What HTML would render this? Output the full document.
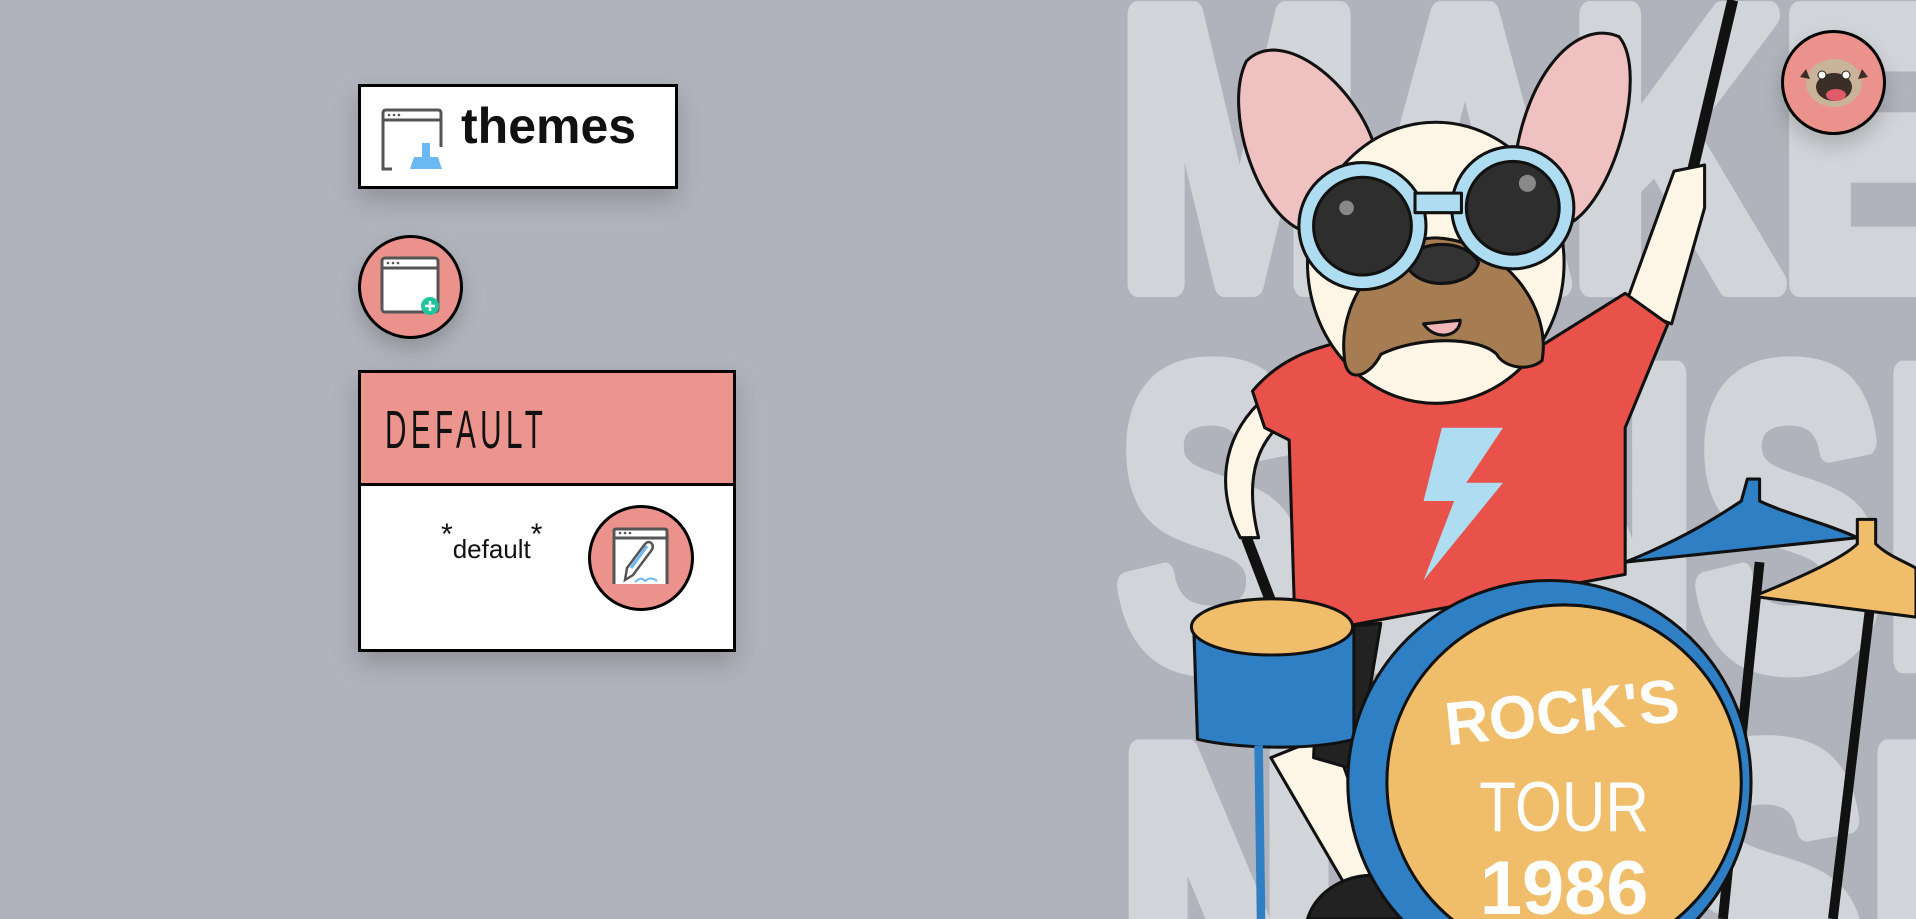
<!DOCTYPE html>
<html><head><meta charset="utf-8"><style>
html,body{margin:0;padding:0}
body{width:1916px;height:919px;overflow:hidden;background:#b0b3bb;position:relative;font-family:"Liberation Sans",sans-serif}
.abs{position:absolute}
svg{overflow:hidden}
.box{position:absolute;background:#fff;border:3px solid #000;box-sizing:border-box;box-shadow:0 12px 24px rgba(0,0,0,.18)}
.circ{position:absolute;border-radius:50%;background:#ec928c;border:3px solid #000;box-sizing:border-box;box-shadow:0 10px 20px rgba(0,0,0,.18)}
</style></head><body>
<svg class="abs" style="left:0;top:0" width="1916" height="919" viewBox="0 0 1568 752">
 <g fill="#d1d4d8" stroke="#d1d4d8" stroke-width="22" stroke-linejoin="round" font-family="Liberation Sans" font-weight="bold">
  <text x="915" y="232" font-size="320" textLength="700" lengthAdjust="spacingAndGlyphs">MAKE</text>
  <text x="915" y="540" font-size="340" textLength="780" lengthAdjust="spacingAndGlyphs">SENSE</text>
  <text x="915" y="850" font-size="340" textLength="780" lengthAdjust="spacingAndGlyphs">NOISE</text>
 </g>
 <g stroke="#111" stroke-width="2.5" stroke-linejoin="round">
  <line x1="1385" y1="140" x2="1418" y2="0" stroke-width="9"/>
  <path d="M1070 190 C1030 180 1000 90 1020 50 C1050 20 1110 70 1125 120 Z" fill="#f0c1c1"/>
  <path d="M1240 130 C1250 60 1290 15 1325 30 C1350 60 1320 170 1280 185 Z" fill="#f0c1c1"/>
  <path d="M1330 250 L1370 140 L1395 135 L1395 170 L1368 265 Z" fill="#fdf5e6"/>
  <path d="M1030 330 C1000 360 995 400 1015 440 L1030 440 C1020 400 1025 370 1045 350 Z" fill="#fdf5e6"/>
  <path d="M1040 620 L1110 740 L1140 740 L1090 600 Z" fill="#fdf5e6"/>
  <path d="M1070 752 C1080 720 1120 710 1140 720 L1150 752 Z" fill="#222"/>
  <path d="M1025 320 C1050 290 1080 285 1095 280 L1250 290 L1330 240 L1365 265 L1330 350 L1330 470 L1060 520 L1055 360 L1035 350 Z" fill="#e8524a"/>
  <path d="M1080 515 L1130 510 L1110 630 L1075 620 Z" fill="#222"/>
  <ellipse cx="1175" cy="215" rx="105" ry="115" fill="#fdf5e6"/>
  <path d="M1100 290 C1095 240 1140 190 1180 195 C1230 200 1270 250 1262 295 C1250 305 1230 300 1225 290 C1210 275 1160 275 1130 290 C1120 310 1100 315 1100 290 Z" fill="#a67c52"/>
  <path d="M1165 265 C1175 280 1195 275 1195 262 Z" fill="#f0b6b8"/>
  <path d="M1150 215 C1160 195 1200 195 1210 215 C1205 235 1160 240 1150 215 Z" fill="#333"/>
  <circle cx="1115" cy="185" r="52" fill="#aedcf0"/>
  <circle cx="1238" cy="170" r="50" fill="#aedcf0"/>
  <rect x="1158" y="158" width="38" height="16" fill="#aedcf0"/>
  <circle cx="1115" cy="185" r="40" fill="#2e2e2e"/>
  <circle cx="1238" cy="170" r="38" fill="#2e2e2e"/>
  <line x1="1020" y1="440" x2="1066" y2="560" stroke-width="9"/>
  <path d="M977 515 L1108 515 L1108 605 C1070 615 1010 612 980 605 Z" fill="#2e7fc4"/>
  <ellipse cx="1041" cy="513" rx="66" ry="23" fill="#f0be6a"/>
  <line x1="1030" y1="610" x2="1032" y2="752" stroke-width="7" stroke="#2e7fc4"/>
  <line x1="1440" y1="460" x2="1410" y2="752" stroke-width="8"/>
  <line x1="1530" y1="500" x2="1500" y2="752" stroke-width="8"/>
  <circle cx="1268" cy="640" r="165" fill="#2e7fc4"/>
  <circle cx="1280" cy="640" r="145" fill="#f0be6a"/>
  <path d="M1330 460 C1380 440 1410 420 1425 410 L1430 392 L1440 392 L1440 410 C1460 420 1500 430 1520 440 Z" fill="#2e7fc4"/>
  <path d="M1435 488 C1480 470 1510 455 1520 445 L1520 425 L1535 425 L1535 445 C1545 455 1560 460 1568 465 L1568 505 Z" fill="#f0be6a"/>
 </g>
 <path d="M1180 350 L1230 350 L1200 395 L1230 395 L1165 475 L1190 410 L1165 410 Z" fill="#aedcf0"/>
 <circle cx="1102" cy="170" r="6" fill="#888"/><circle cx="1250" cy="150" r="7" fill="#888"/>
 <g fill="#fff" text-anchor="middle" font-family="Liberation Sans">
  <text x="1278" y="600" font-size="50" font-weight="bold" transform="rotate(-6 1278 580)">ROCK'S</text>
  <text x="1280" y="680" font-size="58" transform="scale(0.85 1)" style="transform-origin:1280px 680px">TOUR</text>
  <text x="1280" y="748" font-size="62" font-weight="bold">1986</text>
 </g>
</svg>

<div class="box" style="left:358px;top:84px;width:320px;height:105px">
 <svg class="abs" style="left:19px;top:20px" width="66" height="66" viewBox="0 0 66 66">
  <path d="M3 52 V6 Q3 3 6 3 H58 Q61 3 61 6 V40" fill="none" stroke="#555" stroke-width="3"/>
  <line x1="3" y1="13" x2="61" y2="13" stroke="#555" stroke-width="3"/>
  <circle cx="9" cy="8" r="1.3" fill="#555"/><circle cx="14" cy="8" r="1.3" fill="#555"/><circle cx="19" cy="8" r="1.3" fill="#555"/>
  <path d="M3 52 V62 H12" fill="none" stroke="#555" stroke-width="3"/>
  <path d="M30 62 L34 50 H42 V36 H50 V50 H58 L62 62 Z" fill="#6cb8f2"/>
 </svg>
 <div class="abs" style="left:100px;top:10px;font-size:50px;font-weight:bold;letter-spacing:0;color:#111">themes</div>
</div>

<div class="circ" style="left:358px;top:235px;width:105px;height:104px">
 <svg class="abs" style="left:19px;top:18px" width="62" height="62" viewBox="0 0 62 62">
  <rect x="2" y="2" width="56" height="54" rx="3" fill="#fff" stroke="#555" stroke-width="3"/>
  <line x1="2" y1="12" x2="58" y2="12" stroke="#555" stroke-width="3"/>
  <circle cx="8" cy="7" r="1.3" fill="#555"/><circle cx="13" cy="7" r="1.3" fill="#555"/><circle cx="18" cy="7" r="1.3" fill="#555"/>
  <circle cx="50" cy="50" r="9" fill="#22c49b"/>
  <path d="M50 45 V55 M45 50 H55" stroke="#fff" stroke-width="2.5"/>
 </svg>
</div>

<div class="box" style="left:358px;top:370px;width:378px;height:282px">
 <div class="abs" style="left:0;top:0;width:372px;height:110px;background:#ec958f;border-bottom:3px solid #000"></div>
 <div class="abs" style="left:24px;top:26px;font-size:54px;letter-spacing:8px;color:#111;transform:scaleX(0.55);transform-origin:left">DEFAULT</div>
 <div class="abs" style="left:80px;top:145px;font-size:30px;color:#111">*<span style="font-size:26px;position:relative;top:14px">default</span>*</div>
 <div class="circ" style="left:227px;top:132px;width:106px;height:106px;box-shadow:none">
  <svg class="abs" style="left:20px;top:18px" width="60" height="62" viewBox="0 0 60 62">
   <path d="M3 58 V5 Q3 3 5 3 H53 Q56 3 56 5 V58" fill="#fff" stroke="#555" stroke-width="3"/>
   <line x1="3" y1="12" x2="56" y2="12" stroke="#555" stroke-width="3"/>
   <circle cx="9" cy="7" r="1.3" fill="#555"/><circle cx="14" cy="7" r="1.3" fill="#555"/><circle cx="19" cy="7" r="1.3" fill="#555"/>
   <path d="M14 54 L16 42 L34 18 Q38 14 41 18 Q43 21 40 25 L22 49 Z" fill="#fff" stroke="#555" stroke-width="2.5"/>
   <line x1="36" y1="20" x2="20" y2="42" stroke="#6cb8f2" stroke-width="3"/>
   <path d="M24 56 Q30 50 34 55 Q40 50 46 55" fill="none" stroke="#6cb8f2" stroke-width="2"/>
  </svg>
 </div>
</div>

<div class="circ" style="left:1781px;top:30px;width:105px;height:105px">
 <svg class="abs" style="left:10px;top:14px" width="80" height="70" viewBox="0 0 80 70">
  <ellipse cx="40" cy="36" rx="28" ry="24" fill="#c9b49a"/>
  <path d="M12 22 L6 30 L16 32 Z M68 22 L74 30 L64 32 Z" fill="#3a2e26"/>
  <ellipse cx="40" cy="40" rx="18" ry="14" fill="#3a2e26"/>
  <circle cx="28" cy="28" r="4" fill="#fff" stroke="#222"/><circle cx="52" cy="28" r="4" fill="#fff" stroke="#222"/>
  <ellipse cx="42" cy="48" rx="10" ry="6" fill="#e05a6a"/>
 </svg>
</div>
</body></html>
